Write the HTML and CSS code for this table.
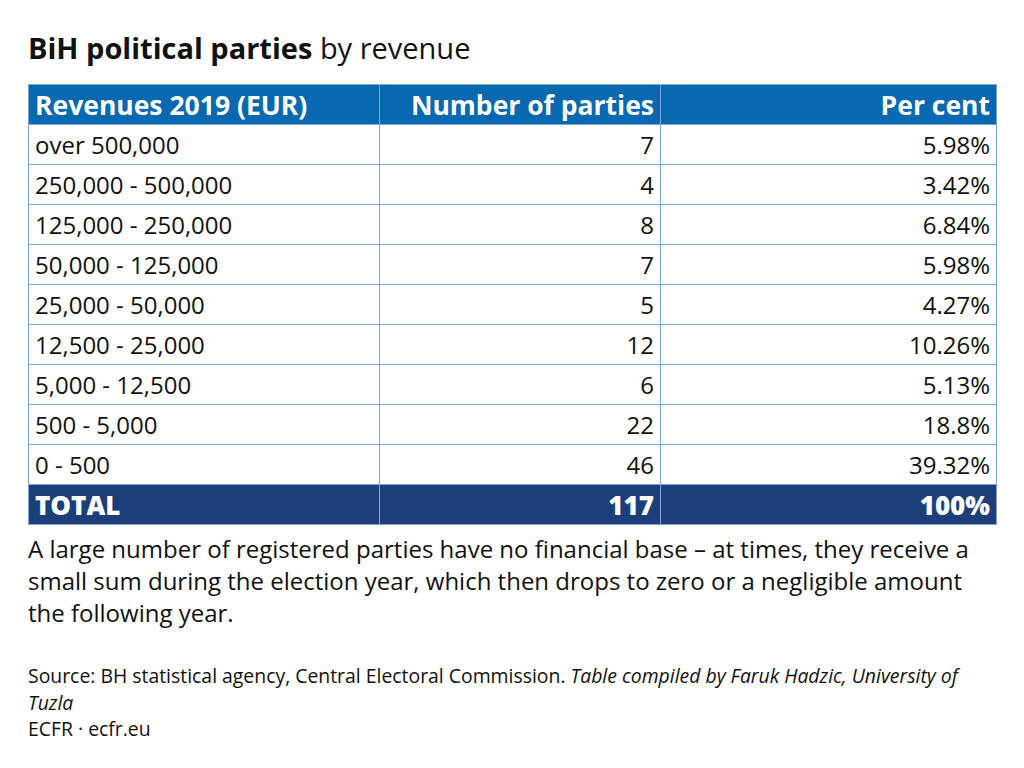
FILE: index.html
```html
<!DOCTYPE html>
<html lang="en">
<head>
<meta charset="utf-8">
<title>BiH political parties by revenue</title>
<link rel="stylesheet" href="styles.css">
</head>
<body>
<main class="page">
  <h1 class="title"><strong>BiH political parties</strong> by revenue</h1>
  <table class="data">
    <colgroup>
      <col class="c1"><col class="c2"><col class="c3">
    </colgroup>
    <thead>
      <tr><th class="left">Revenues 2019 (EUR)</th><th>Number of parties</th><th>Per cent</th></tr>
    </thead>
    <tbody>
      <tr><td class="left">over 500,000</td><td>7</td><td>5.98%</td></tr>
      <tr><td class="left">250,000 - 500,000</td><td>4</td><td>3.42%</td></tr>
      <tr><td class="left">125,000 - 250,000</td><td>8</td><td>6.84%</td></tr>
      <tr><td class="left">50,000 - 125,000</td><td>7</td><td>5.98%</td></tr>
      <tr><td class="left">25,000 - 50,000</td><td>5</td><td>4.27%</td></tr>
      <tr><td class="left">12,500 - 25,000</td><td>12</td><td>10.26%</td></tr>
      <tr><td class="left">5,000 - 12,500</td><td>6</td><td>5.13%</td></tr>
      <tr><td class="left">500 - 5,000</td><td>22</td><td>18.8%</td></tr>
      <tr><td class="left">0 - 500</td><td>46</td><td>39.32%</td></tr>
    </tbody>
    <tfoot>
      <tr><th class="left">TOTAL</th><th>117</th><th>100%</th></tr>
    </tfoot>
  </table>
  <p class="note">A large number of registered parties have no financial base – at times, they receive a<br>small sum during the election year, which then drops to zero or a negligible amount<br>the following year.</p>
  <p class="source">Source: BH statistical agency, Central Electoral Commission. <em>Table compiled by Faruk Hadzic, University of<br>Tuzla</em><br>ECFR · ecfr.eu</p>
</main>
</body>
</html>
```

FILE: styles.css
```css
html, body {
  margin: 0;
  padding: 0;
  background: #ffffff;
}
body {
  font-family: "Open Sans", "DejaVu Sans", sans-serif;
  color: #111111;
}
.page {
  padding: 28px 28px 0 28px;
  width: 968px;
}
.title {
  margin: 0 0 16px 0;
  font-size: 29px;
  font-weight: 400;
  line-height: 40px;
}
.title strong {
  font-weight: 700;
}
.data {
  width: 968px;
  border-collapse: collapse;
  table-layout: fixed;
  font-size: 24px;
}
.c1 { width: 351px; }
.c2 { width: 281px; }
.c3 { width: 336px; }
.data th, .data td {
  border: 1.5px solid #7fa6dc;
  height: 40px;
  padding: 0 6px;
  text-align: right;
  box-sizing: border-box;
  line-height: 38px;
}
.data .left {
  text-align: left;
}
.data thead th {
  background: #0868b0;
  color: #ffffff;
  font-weight: 700;
  font-size: 26.5px;
}
.data tfoot th {
  background: #1c3f7a;
  color: #ffffff;
  font-weight: 800;
  font-size: 26px;
}
.note {
  margin: 8px 0 0 0;
  font-size: 24px;
  line-height: 32px;
}
.source {
  margin: 34px 0 0 0;
  font-size: 19.4px;
  line-height: 26.5px;
}
```
